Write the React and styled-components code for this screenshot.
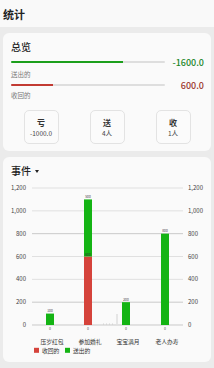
import React from 'react';
import styled, { createGlobalStyle } from 'styled-components';

const Global = createGlobalStyle`
  html, body { margin: 0; padding: 0; background: #ebebeb; }
  body {
    font-family: "Noto Sans CJK SC", "Noto Sans", sans-serif;
    width: 214px; height: 368px; overflow: hidden;
  }
`;

const Page = styled.div`
  display: flex;
  flex-direction: column;
  height: 368px;
`;

const Header = styled.div`
  height: 27px;
  box-sizing: border-box;
  background: #f9f9f9;
  display: flex;
  align-items: center;
  padding-left: 3px;
  font-size: 11px;
  font-weight: 700;
  color: #222;
`;

const Body = styled.div`
  display: flex;
  flex-direction: column;
  gap: 6px;
  padding: 6px 3px 0;
`;

const Card = styled.div`
  background: #fafafa;
  border-radius: 6px;
  box-sizing: border-box;
  height: ${p => p.$h}px;
  padding: 7px 5px 0;
  display: flex;
  flex-direction: column;
`;

const CardTitle = styled.div`
  font-size: 10px;
  line-height: 14px;
  font-weight: 500;
  color: #222;
  padding-left: 3px;
  display: flex;
  align-items: center;
  gap: 4px;
`;

const Caret = styled.span`
  width: 0; height: 0;
  border-left: 2.5px solid transparent;
  border-right: 2.5px solid transparent;
  border-top: 3px solid #222;
`;

const ProgressRow = styled.div`
  height: ${p => p.$h}px;
  display: flex;
  align-items: center;
  padding-left: 3px;
`;

const Track = styled.div`
  width: 154px;
  height: 2.5px;
  background: #dedede;
  border-radius: 1px;
  overflow: hidden;
  display: flex;
`;

const Fill = styled.div`
  height: 100%;
  background: ${p => p.$color};
`;

const Amount = styled.div`
  flex: 1;
  text-align: right;
  padding-right: 2px;
  font-size: 9px;
  font-weight: 500;
  color: ${p => p.$color};
`;

const SubLabel = styled.div`
  height: 9px;
  line-height: 9px;
  font-size: 6.5px;
  color: #777;
  padding-left: 3px;
`;

const Stats = styled.div`
  margin-top: 10px;
  display: grid;
  grid-template-columns: repeat(3, 66px);
  justify-items: center;
`;

const StatBox = styled.div`
  width: 35px;
  height: 34px;
  box-sizing: border-box;
  border: 1px solid #e3e3e3;
  border-radius: 5px;
  background: #fbfbfb;
  display: flex;
  flex-direction: column;
  align-items: center;
  justify-content: center;
  gap: 1px;
`;

const StatTitle = styled.div`
  font-size: 8px;
  line-height: 11px;
  font-weight: 700;
  color: #333;
`;

const StatValue = styled.div`
  font-size: 6.5px;
  line-height: 9px;
  color: #444;
`;

const ChartSvg = styled.svg`
  display: block;
  margin: 0 -5px;
  font-family: "Noto Sans CJK SC", "Noto Sans", sans-serif;
`;

const GREEN = '#14b414';
const RED = '#d5433b';
const yOf = v => 147 - v * (137 / 1200);

const ticks = [0, 200, 400, 600, 800, 1000, 1200];
const fmt = v => v.toLocaleString('en-US');

const bars = [
  { x: 47, label: '压岁红包', red: 0, green: 100 },
  { x: 85, label: '参加婚礼', red: 600, green: 500 },
  { x: 123, label: '宝宝满月', red: 0, green: 200 },
  { x: 162, label: '老人办寿', red: 0, green: 800 },
];

function Chart() {
  return (
    <ChartSvg width="208" height="184" viewBox="0 0 208 184">
      {ticks.map(t => (
        <g key={t}>
          <line x1="29" x2="180" y1={yOf(t)} y2={yOf(t)}
            stroke={t === 800 || t === 200 || t === 0 ? '#c9c9c9' : '#e0e0e0'} strokeWidth="1" />
          <text x="23" y={yOf(t) + 2} fontSize="6" fill="#444" textAnchor="end">{fmt(t)}</text>
          <text x="185" y={yOf(t) + 2} fontSize="6" fill="#444">{fmt(t)}</text>
        </g>
      ))}
      <line x1="114" x2="114" y1="136" y2="146" stroke="#bbb" strokeWidth="0.6" />
      <line x1="100" x2="112" y1="146" y2="146" stroke="#bbb" strokeWidth="0.6" strokeDasharray="1 2" />
      {bars.map(b => {
        const redTop = yOf(b.red);
        const greenTop = yOf(b.red + b.green);
        return (
          <g key={b.label}>
            {b.red > 0 && <rect x={b.x - 4} y={redTop} width="8" height={147 - redTop} fill={RED} />}
            <rect x={b.x - 4} y={greenTop} width="8" height={redTop - greenTop} fill={GREEN} />
            {b.red > 0 && <text x={b.x} y={redTop - 1} fontSize="3.2" fill="#333" textAnchor="middle">600</text>}
            <text x={b.x} y={greenTop - 1.5} fontSize="3.2" fill="#333" textAnchor="middle">{b.green}</text>
            <text x={b.x} y="151.5" fontSize="3.5" fill="#555" textAnchor="middle">0</text>
            <text x={b.x + 2} y="166.3" fontSize="5.8" fill="#333" textAnchor="middle">{b.label}</text>
          </g>
        );
      })}
      <rect x="31" y="169.8" width="5" height="5" fill={RED} />
      <text x="39" y="174.6" fontSize="5.8" fill="#333">收回的</text>
      <rect x="62" y="169.8" width="5" height="5" fill={GREEN} />
      <text x="70" y="174.6" fontSize="5.8" fill="#333">送出的</text>
    </ChartSvg>
  );
}

const stats = [
  { title: '亏', value: '-1000.0' },
  { title: '送', value: '4人' },
  { title: '收', value: '1人' },
];

export default function App() {
  return (
    <Page>
      <Global />
      <Header>统计</Header>
      <Body>
        <Card $h={118}>
          <CardTitle>总览</CardTitle>
          <ProgressRow $h={16}>
            <Track><Fill $color="#1c9f1c" style={{ width: `${(112 / 154) * 100}%` }} /></Track>
            <Amount $color="#23862a">-1600.0</Amount>
          </ProgressRow>
          <SubLabel>送出的</SubLabel>
          <ProgressRow $h={12}>
            <Track><Fill $color="#c23b33" style={{ width: `${(42 / 154) * 100}%` }} /></Track>
            <Amount $color="#9a362c">600.0</Amount>
          </ProgressRow>
          <SubLabel>收回的</SubLabel>
          <Stats>
            {stats.map(s => (
              <StatBox key={s.title}>
                <StatTitle>{s.title}</StatTitle>
                <StatValue>{s.value}</StatValue>
              </StatBox>
            ))}
          </Stats>
        </Card>
        <Card $h={205}>
          <CardTitle>事件<Caret /></CardTitle>
          <Chart />
        </Card>
      </Body>
    </Page>
  );
}
